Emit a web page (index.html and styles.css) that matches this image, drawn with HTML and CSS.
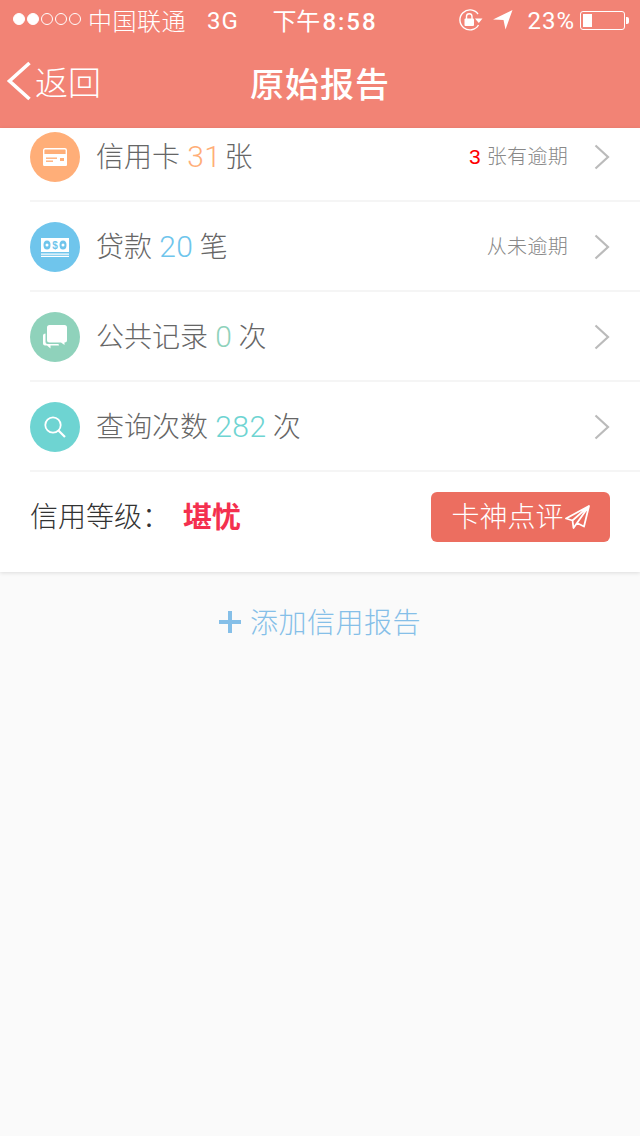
FILE: index.html
```html
<!DOCTYPE html>
<html lang="zh">
<head>
    <meta charset="UTF-8" />
    <meta name="viewport" content="width=device-width, initial-scale=1.0" />
    <title>原始报告</title>
    <link rel="stylesheet" href="styles.css">
</head>
<body>
<header class="top">
    <div class="status">
        <div class="status-left">
            <span class="signal">
                <i class="dot on"></i><i class="dot on"></i><i class="dot"></i><i class="dot"></i><i class="dot"></i>
            </span>
            <span class="carrier">中国联通</span>
            <span class="net">3G</span>
        </div>
        <div class="clock">下午<span class="clock-num">8:58</span></div>
        <div class="status-right">
            <svg class="lock-icon" width="26" height="24" viewBox="0 0 26 24">
                <path d="M20 6A10 10 0 1 0 20.500 17" fill="none" stroke="#fff" stroke-width="1.400"/>
                <path d="M17 10.500h7.500l-3.700 4.500z" fill="#fff"/>
                <rect x="6.500" y="10.500" width="9.500" height="7.500" rx="1" fill="#fff"/>
                <path d="M8.500 11V8.500a2.750 2.750 0 0 1 5.500 0V11" fill="none" stroke="#fff" stroke-width="1.400"/>
            </svg>
            <svg class="arrow-icon" width="20" height="20" viewBox="0 0 20 20">
                <path d="M0 9.500L19.500 0L12.500 19.500L10.500 10z" fill="#fff"/>
            </svg>
            <span class="percent">23%</span>
            <span class="battery"><span class="battery-fill"></span></span>
            <span class="battery-tip"></span>
        </div>
    </div>
    <nav class="navbar">
        <a class="back">
            <svg class="back-icon" width="26" height="40" viewBox="0 0 26 40">
                <path d="M23.500 2L3.500 20L23.500 38" fill="none" stroke="#fff" stroke-width="3.600"/>
            </svg>
            <span class="back-text">返回</span>
        </a>
        <h1>原始报告</h1>
    </nav>
</header>

<main>
    <section class="card">
        <div class="row row-first">
            <span class="circle orange">
                <svg width="24" height="18" viewBox="0 0 24 18">
                    <rect x="0.700" y="0.700" width="22.600" height="16.600" rx="1.500" fill="none" stroke="#fff" stroke-width="1.400"/>
                    <rect x="0" y="6" width="24" height="12" rx="1.500" fill="#fff"/>
                    <rect x="3" y="9.500" width="11" height="1.400" fill="#ffae78"/>
                    <rect x="3" y="12.500" width="7" height="1.400" fill="#ffae78"/>
                    <rect x="17" y="10" width="4" height="3" fill="#ffae78"/>
                </svg>
            </span>
            <span class="label">信用卡 <b class="num tight c-orange">31</b>张</span>
            <span class="note"><em>3</em> 张有逾期</span>
            <svg class="chevron" width="16" height="26" viewBox="0 0 16 26"><path d="M1.500 1.500L14 13L1.500 24.500" fill="none" stroke="#bbb" stroke-width="2.200"/></svg>
        </div>
        <div class="row">
            <span class="circle blue">
                <svg width="28" height="19" viewBox="0 0 28 19">
                    <rect x="0" y="0" width="28" height="14" fill="#fff"/>
                    <rect x="0" y="15.500" width="28" height="1.200" fill="#fff"/>
                    <rect x="0" y="17.800" width="28" height="1.200" fill="#fff"/>
                    <ellipse cx="6" cy="7" rx="3.500" ry="4.500" fill="#6fc5ec"/>
                    <ellipse cx="22" cy="7" rx="3.500" ry="4.500" fill="#6fc5ec"/>
                    <circle cx="6" cy="7" r="1.500" fill="#fff"/>
                    <circle cx="22" cy="7" r="1.500" fill="#fff"/>
                    <text class="bill-sign" x="14" y="10.500">$</text>
                </svg>
            </span>
            <span class="label">贷款 <b class="num c-blue">20</b> 笔</span>
            <span class="note">从未逾期</span>
            <svg class="chevron" width="16" height="26" viewBox="0 0 16 26"><path d="M1.500 1.500L14 13L1.500 24.500" fill="none" stroke="#bbb" stroke-width="2.200"/></svg>
        </div>
        <div class="row">
            <span class="circle green">
                <svg width="24" height="24" viewBox="0 0 24 24">
                    <path d="M4 2.500Q4 0 6.500 0H21.500Q24 0 24 2.500V15Q24 17.500 21.500 17.500H21.500V20L18 17.500H6.500Q4 17.500 4 15z" fill="#fff"/>
                    <path d="M2.500 8.500V17Q2.500 19 4.500 19H15.500L16 20.500H7.500V23.500L4 20.500H2Q0 20.500 0 18.500V10.500Q0 8.500 2.500 8.500z" fill="#fff"/>
                </svg>
            </span>
            <span class="label">公共记录 <b class="num c-green">0</b> 次</span>
            <svg class="chevron" width="16" height="26" viewBox="0 0 16 26"><path d="M1.500 1.500L14 13L1.500 24.500" fill="none" stroke="#bbb" stroke-width="2.200"/></svg>
        </div>
        <div class="row">
            <span class="circle teal">
                <svg width="22" height="22" viewBox="0 0 22 22">
                    <circle cx="9" cy="9" r="7.700" fill="none" stroke="#fff" stroke-width="1.800"/>
                    <path d="M14.500 14.500L21 21" stroke="#fff" stroke-width="2.200"/>
                </svg>
            </span>
            <span class="label">查询次数 <b class="num c-teal">282</b> 次</span>
            <svg class="chevron" width="16" height="26" viewBox="0 0 16 26"><path d="M1.500 1.500L14 13L1.500 24.500" fill="none" stroke="#bbb" stroke-width="2.200"/></svg>
        </div>
        <div class="grade">
            <span class="grade-label">信用等级：</span>
            <strong class="grade-value">堪忧</strong>
            <button class="review">
                <span class="review-text">卡神点评</span>
                <svg width="25" height="24" viewBox="0 0 25 24">
                    <path d="M24 1L1 13.500L7.500 15.500L24 1L12 18L19 21.500zM7.500 15.500L8.500 23L12 18" fill="none" stroke="#fff" stroke-width="1.800" stroke-linejoin="round"/>
                </svg>
            </button>
        </div>
    </section>

    <a class="add"><span class="plus"></span><span class="add-text">添加信用报告</span></a>
</main>
</body>
</html>
```

FILE: styles.css
```css
* {
    box-sizing: border-box;
}
body {
    margin: 0;
    height: 1136px;
    overflow: hidden;
    background-color: #FAFAFA;
    font-family: "Noto Sans CJK SC", "Liberation Sans", sans-serif;
    font-weight: 300;
}
.top {
    background-color: #F28375;
    color: white;
    height: 128px;
}
.status {
    height: 40px;
    padding: 0 11px 2px 13px;
    display: flex;
    align-items: center;
    justify-content: space-between;
    font-size: 24px;
}
.status-left, .status-right {
    display: flex;
    align-items: center;
    width: 240px;
}
.status-right {
    justify-content: flex-end;
}
.signal {
    display: flex;
    gap: 2px;
    margin-right: 7px;
}
.dot {
    width: 12px;
    height: 12px;
    border-radius: 50%;
    border: 1px solid white;
}
.dot.on {
    background-color: white;
}
.carrier {
    letter-spacing: 0.5px;
}
.net {
    margin: 3px 0 0 21px;
    font-family: Roboto, sans-serif;
    font-weight: 400;
    letter-spacing: 1px;
}
.clock {
    font-weight: 400;
    margin-left: 8px;
}
.clock-num {
    font-family: Roboto, sans-serif;
    font-weight: 500;
    letter-spacing: 2px;
    margin-left: 2px;
}
.lock-icon {
    margin: 2px 9px 0 0;
}
.arrow-icon {
    margin: 2px 14px 0 0;
}
.percent {
    margin: 3px 5px 0 0;
    font-family: Roboto, sans-serif;
    font-weight: 400;
    letter-spacing: 1px;
}
.battery {
    width: 45px;
    height: 19px;
    margin: 2px 1px 0 0;
    border: 1px solid white;
    border-radius: 3px;
    padding: 2px;
    display: flex;
}
.battery-fill {
    width: 9px;
    background-color: white;
}
.battery-tip {
    width: 3px;
    height: 7px;
    margin-top: 2px;
    background-color: white;
    border-radius: 0 2px 2px 0;
}
.navbar {
    height: 88px;
    position: relative;
    display: flex;
    align-items: center;
    justify-content: center;
    padding-bottom: 3px;
}
.navbar h1 {
    margin: 0;
    font-size: 34px;
    font-weight: 500;
    letter-spacing: 1px;
}
.back {
    position: absolute;
    left: 6px;
    top: 17px;
    display: flex;
    align-items: center;
    gap: 3px;
    font-size: 33px;
}
.back-icon {
    margin-bottom: 6px;
}
.back-text {
    margin-bottom: 6px;
}
.card {
    background-color: white;
    box-shadow: 0 1px 4px rgba(0, 0, 0, 0.12);
    padding-left: 30px;
}
.row {
    height: 90px;
    padding: 20px 30px 18px 0;
    border-bottom: 2px solid #F5F5F5;
    display: flex;
    align-items: center;
}
.row-first {
    height: 74px;
    padding-top: 4px;
}
.circle {
    width: 50px;
    height: 50px;
    border-radius: 50%;
    display: flex;
    align-items: center;
    justify-content: center;
    flex-shrink: 0;
}
.orange { background-color: #FFAE78; }
.blue { background-color: #6FC5EC; }
.green { background-color: #8FD2BB; }
.teal { background-color: #6ED4D2; }
.bill-sign {
    font-family: "Liberation Sans", sans-serif;
    font-size: 10px;
    font-weight: 700;
    fill: #6FC5EC;
    text-anchor: middle;
}
.label {
    margin: 0 0 5px 16px;
    font-size: 28px;
    color: #666;
    flex: 1;
    white-space: nowrap;
}
.num {
    font-family: Roboto, sans-serif;
    font-size: 30px;
    font-weight: 300;
    letter-spacing: 0.5px;
    margin-left: 1px;
}
.num.tight {
    margin-right: 3px;
}
.c-orange { color: #FFAE78; }
.c-blue { color: #6FC5EC; }
.c-green { color: #8FD2BB; }
.c-teal { color: #6ED4D2; }
.note {
    font-size: 20px;
    letter-spacing: 0.3px;
    color: #888;
    margin: 0 26px 3px 0;
}
.note em {
    font-size: 21px;
    font-style: normal;
    color: #FF0000;
    font-family: "Liberation Sans", sans-serif;
    margin-right: 1px;
}
.grade {
    height: 100px;
    padding: 0 30px 10px 0;
    display: flex;
    align-items: center;
}
.grade-label {
    font-size: 28px;
    color: #333;
    width: 153px;
    margin-bottom: 5px;
}
.grade-value {
    font-size: 29px;
    font-weight: 700;
    color: #F4304F;
    flex: 1;
    margin-bottom: 5px;
}
.review {
    width: 179px;
    height: 50px;
    border: none;
    border-radius: 6px;
    background-color: #EC6E60;
    color: white;
    font-family: inherit;
    font-weight: 300;
    font-size: 28px;
    display: flex;
    align-items: center;
    justify-content: center;
    padding: 0;
}
.review-text {
    margin: 0 1px 4px 0;
}
.add {
    height: 100px;
    display: flex;
    align-items: center;
    justify-content: center;
    color: #85BFE8;
    font-size: 28px;
}
.add-text {
    letter-spacing: 0.5px;
    margin-bottom: 2px;
}
.plus {
    width: 22px;
    height: 22px;
    margin-right: 9px;
    background:
        linear-gradient(#85BFE8, #85BFE8) center / 100% 4px no-repeat,
        linear-gradient(#85BFE8, #85BFE8) center / 4px 100% no-repeat;
}
```
